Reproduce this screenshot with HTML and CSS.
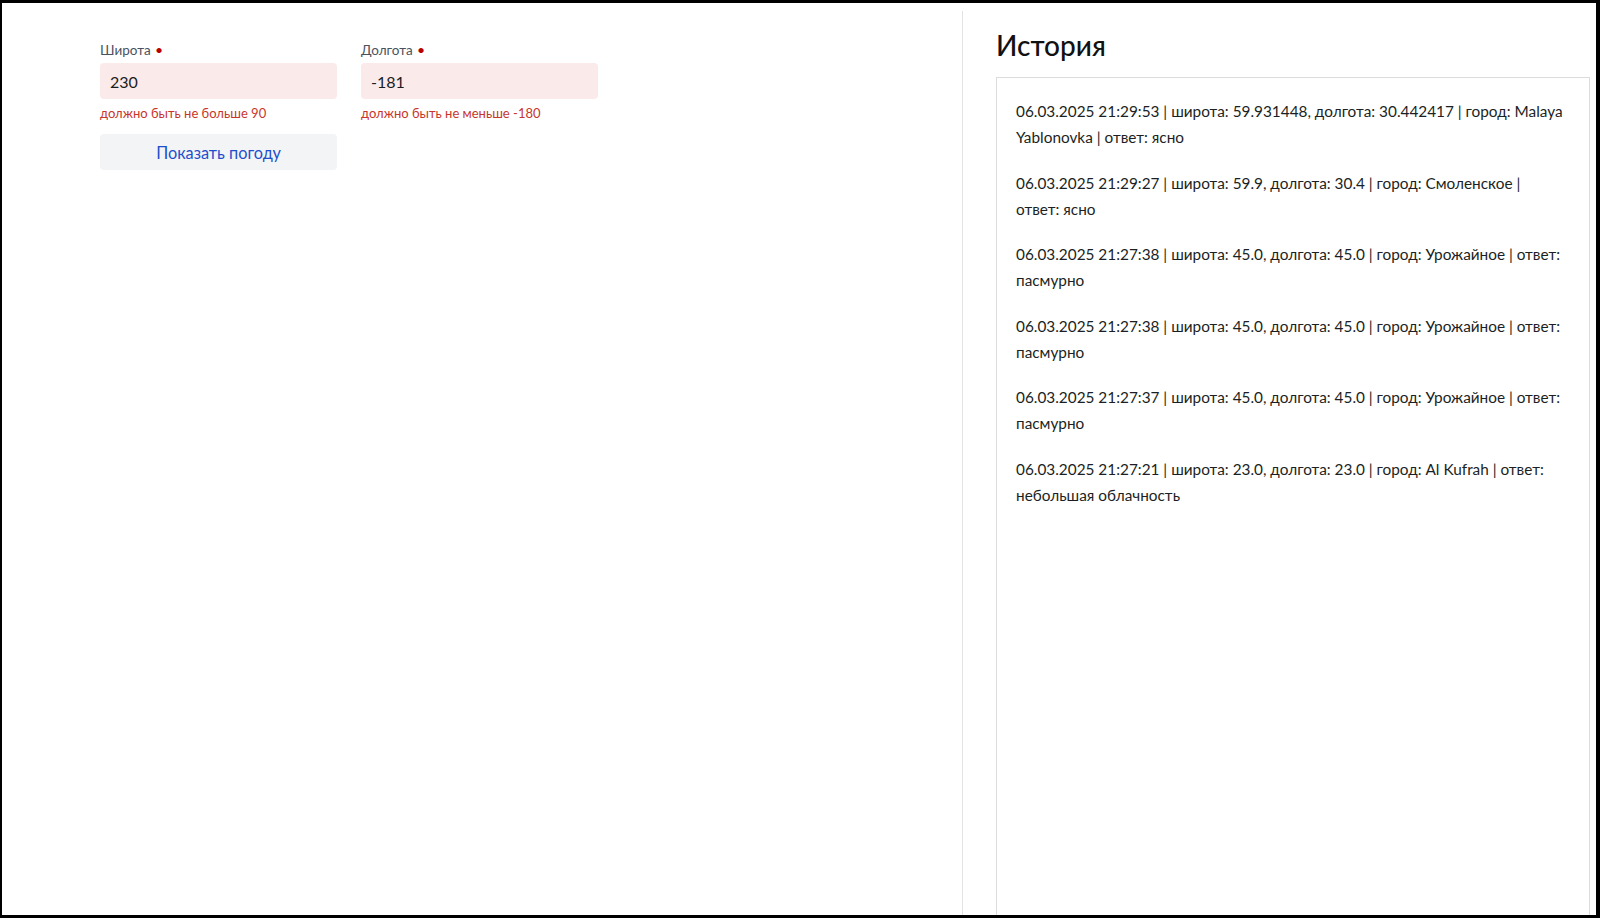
FILE: index.html
```html
<!DOCTYPE html>
<html lang="ru">
<head>
<meta charset="utf-8">
<title>Погода</title>
<link rel="stylesheet" href="styles.css">
</head>
<body>
<div class="frame">
  <main class="layout">
    <section class="form-col">
      <form class="weather-form">
        <div class="fields">
          <div class="field">
            <label class="field-label">Широта <span class="req">•</span></label>
            <input class="field-input" type="text" value="230">
            <div class="field-error">должно быть не больше 90</div>
          </div>
          <div class="field">
            <label class="field-label">Долгота <span class="req">•</span></label>
            <input class="field-input" type="text" value="-181">
            <div class="field-error">должно быть не меньше -180</div>
          </div>
        </div>
        <button type="button" class="submit-btn">Показать погоду</button>
      </form>
    </section>
    <section class="history-col">
      <h2 class="history-title">История</h2>
      <div class="history-box">
        <p class="history-item">06.03.2025 21:29:53 | широта: 59.931448, долгота: 30.442417 | город: Malaya Yablonovka | ответ: ясно</p>
        <p class="history-item">06.03.2025 21:29:27 | широта: 59.9, долгота: 30.4 | город: Смоленское | ответ: ясно</p>
        <p class="history-item">06.03.2025 21:27:38 | широта: 45.0, долгота: 45.0 | город: Урожайное | ответ: пасмурно</p>
        <p class="history-item">06.03.2025 21:27:38 | широта: 45.0, долгота: 45.0 | город: Урожайное | ответ: пасмурно</p>
        <p class="history-item">06.03.2025 21:27:37 | широта: 45.0, долгота: 45.0 | город: Урожайное | ответ: пасмурно</p>
        <p class="history-item">06.03.2025 21:27:21 | широта: 23.0, долгота: 23.0 | город: Al Kufrah | ответ: небольшая облачность</p>
      </div>
    </section>
  </main>
</div>
</body>
</html>
```

FILE: styles.css
```css
html, body {
  margin: 0;
  padding: 0;
  background: #fff;
}

body {
  font-family: Lato, "Open Sans", sans-serif;
  color: #212529;
}

.frame {
  box-sizing: border-box;
  width: 1600px;
  height: 918px;
  border-style: solid;
  border-color: #000;
  border-width: 3px 4px 3px 2px;
  overflow: hidden;
}

.layout {
  display: flex;
  height: 100%;
}

.form-col {
  box-sizing: border-box;
  width: 960px;
  flex: none;
  padding: 38px 0 0 98px;
}

.fields {
  display: flex;
  gap: 24px;
}

.field {
  display: flex;
  flex-direction: column;
  width: 237px;
}

.field-label {
  font-size: 13.5px;
  line-height: 18px;
  color: #4a5260;
  margin-bottom: 4px;
}

.req {
  color: #b80000;
  font-size: 14px;
  margin-left: 1px;
}

.field-input {
  box-sizing: border-box;
  height: 36px;
  width: 100%;
  border: none;
  border-radius: 4px;
  background: #fbeaea;
  padding: 0 10px;
  font-family: inherit;
  font-size: 16px;
  color: #1a1d21;
  outline: none;
}

.field-error {
  margin-top: 5px;
  font-size: 13px;
  line-height: 18px;
  color: #c8362b;
}

.submit-btn {
  display: block;
  box-sizing: border-box;
  width: 237px;
  height: 36px;
  margin-top: 12px;
  border: none;
  border-radius: 4px;
  background: #f3f4f6;
  font-family: inherit;
  font-size: 16.3px;
  color: #1f4fcc;
  cursor: pointer;
}

.history-col {
  flex: 1;
  display: flex;
  flex-direction: column;
  margin-top: 8px;
  border-left: 1px solid #e2e2e2;
  padding: 0 6px 0 33px;
  min-width: 0;
}

.history-title {
  margin: 19px 0 16px 0;
  font-size: 28px;
  line-height: 31px;
  font-weight: 500;
  color: #111;
}

.history-box {
  flex: 1;
  display: flex;
  flex-direction: column;
  gap: 19.6px;
  border: 1px solid #dcdcdc;
  border-bottom: none;
  padding: 20px 24px 0 19px;
}

.history-item {
  margin: 0;
  font-size: 15.35px;
  line-height: 26px;
  color: #1c1f23;
}
```
